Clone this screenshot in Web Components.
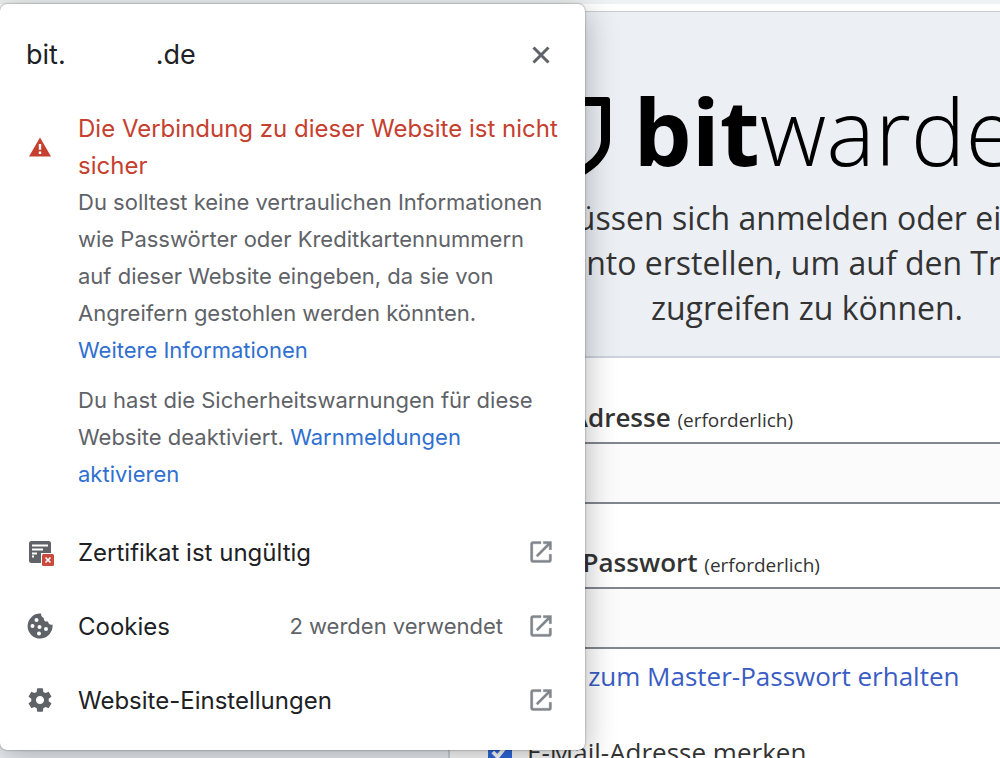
<!DOCTYPE html>
<html lang="de">
<head>
<meta charset="utf-8">
<title>Bitwarden Web-Tresor</title>
<style>
  body {
    margin: 0;
    min-height: 100vh;
    overflow: hidden;
    position: relative;
    background: #ecf0f5;
    color: #333;
    font-family: "Open Sans", sans-serif;
  }
</style>
</head>
<body>
<vault-page></vault-page>
<site-info></site-info>

<script>
const define = (name, html, setup) => {
  const template = document.createElement("template");
  template.innerHTML = html;
  customElements.define(name, class extends HTMLElement {
    constructor() {
      super();
      this.attachShadow({ mode: "open" }).appendChild(template.content.cloneNode(true));
    }

    connectedCallback() {
      if (setup) setup(this, this.shadowRoot);
    }
  });
};

define("bitwarden-logo", `
<style>
  :host {
    display: flex;
    justify-content: center;
    gap: 24px;
    color: #000;
    font-size: 92px;
    line-height: 92px;
    font-weight: 300;
  }
  svg {
    width: 66px;
    height: 82px;
    margin-top: 12px;
  }
  b { font-weight: 700; }
</style>
<svg viewBox="0 0 66 82" aria-hidden="true">
  <path fill-rule="evenodd" d="M3 0H63Q66 0 66 3V43C66 62 46 76 33 82C20 76 0 62 0 43V3Q0 0 3 0ZM33 9V72C42 67 57 57 57 43V9Z"/>
</svg>
<span><b>bit</b>warden</span>`);

define("form-field", `
<style>
  :host { display: block; }
  label {
    display: block;
    font-size: 26px;
    line-height: 36px;
    font-weight: 600;
    margin-bottom: 7px;
  }
  small {
    font-size: 19px;
    line-height: 1;
    font-weight: 400;
  }
  input {
    display: block;
    box-sizing: border-box;
    width: 100%;
    height: 62px;
    padding: 0 16px;
    border: 2px solid #82868f;
    border-radius: 4px;
    background: #fbfbfb;
    font: inherit;
    font-size: 26px;
    outline: none;
  }
</style>
<label for="field"><slot></slot> <small>(erforderlich)</small></label>
<input id="field">`, (host, root) => {
  root.querySelector("input").type = host.getAttribute("type") || "text";
});

define("vault-page", `
<style>
  :host { display: block; }
  .toolbar {
    height: 7px;
    border-top: 4px solid #eff2f2;
    border-bottom: 1px solid #c9ccd1;
    background: #fff;
  }
  .layout {
    display: grid;
    grid-template-columns: 448px minmax(718px, 1fr);
  }
  main { grid-column: 2; }
  header { padding: 73px 24px 26px; }
  header p {
    max-width: 640px;
    margin: 16px auto 0;
    font-size: 32px;
    line-height: 45px;
    text-align: center;
  }
  form {
    padding: 41px 36px 60px;
    border: 2px solid #ced2dc;
    background: #fff;
    font-size: 26px;
    line-height: 36px;
  }
  form-field + form-field { margin-top: 40px; }
  a {
    display: block;
    margin-top: 9px;
    color: #3a5cc5;
    text-decoration: none;
  }
  .remember {
    display: flex;
    align-items: center;
    gap: 15px;
    margin-top: 40px;
  }
  input {
    width: 24px;
    height: 24px;
    margin: 0 0 0 2px;
    accent-color: #2f6ae0;
  }
</style>
<div class="toolbar"></div>
<div class="layout">
  <main>
    <header>
      <bitwarden-logo></bitwarden-logo>
      <p>Sie müssen sich anmelden oder ein neues Konto erstellen, um auf den Tresor zugreifen zu können.</p>
    </header>
    <form>
      <form-field type="email">E-Mail-Adresse</form-field>
      <form-field type="password">Master-Passwort</form-field>
      <a href="#hint">Hinweis zum Master-Passwort erhalten</a>
      <label class="remember"><input type="checkbox" checked>E-Mail-Adresse merken</label>
    </form>
  </main>
</div>`);

define("info-row", `
<style>
  :host { display: block; }
  button {
    display: grid;
    grid-template-columns: 28px 1fr auto 28px;
    align-items: center;
    column-gap: 24px;
    width: 100%;
    height: 74px;
    padding: 0;
    border: 0;
    background: none;
    color: #202124;
    font: inherit;
    font-size: 24px;
    text-align: left;
  }
  .detail {
    color: #5f6368;
    font-size: 22px;
  }
  svg {
    width: 28px;
    height: 28px;
    fill: #80868b;
    stroke: #80868b;
    stroke-width: .3;
  }
  ::slotted(svg) {
    display: block;
    width: 28px;
    height: 28px;
  }
</style>
<button type="button">
  <slot name="icon"></slot>
  <slot></slot>
  <span class="detail"><slot name="detail"></slot></span>
  <svg viewBox="0 0 24 24" aria-hidden="true">
    <path d="M19 19H5V5h7V3H5a2 2 0 0 0-2 2v14a2 2 0 0 0 2 2h14c1.100 0 2-.9 2-2v-5h-2v5zM14 3v2h3.590l-9.830 9.830 1.410 1.410L19 6.410V10h2V3h-7z"/>
  </svg>
</button>`);

define("site-info", `
<style>
  :host {
    position: absolute;
    top: 4px;
    left: 0;
    box-sizing: border-box;
    width: 100%;
    max-width: 585px;
    padding: 35px 30px 13px 26px;
    border-radius: 7px;
    background: #fff;
    box-shadow: 0 0 2px rgba(0, 0, 0, .5), 0 6px 32px rgba(0, 0, 0, .3);
    color: #5f6368;
    font-family: Inter, "Liberation Sans", sans-serif;
    font-size: 22px;
    line-height: 37px;
  }
  .title {
    display: flex;
    justify-content: space-between;
    align-items: center;
  }
  h1 {
    display: flex;
    gap: 90px;
    margin: 0;
    color: #202124;
    font-size: 27px;
    line-height: 32px;
    font-weight: 400;
  }
  .close {
    width: 28px;
    height: 28px;
    padding: 0;
    border: 0;
    background: none;
  }
  .close svg { display: block; }
  .status {
    display: grid;
    grid-template-columns: 28px 1fr;
    align-items: center;
    column-gap: 24px;
    margin: 39px -5px 22px 0;
  }
  .status > svg { justify-self: center; }
  h2 {
    margin: 0;
    color: #c5402f;
    font-size: 24px;
    font-weight: 400;
  }
  .text { grid-column: 2; }
  p { margin: 0; }
  p + p { margin-top: 13px; }
  a {
    color: #3070d0;
    text-decoration: none;
  }
</style>
<div class="title">
  <h1><span>bit.</span><span>.de</span></h1>
  <button class="close" type="button" aria-label="Schließen">
    <svg width="28" height="28" viewBox="0 0 28 28"><path d="M6.500 6.500l15 15m0-15l-15 15" stroke="#5f6368" stroke-width="3"/></svg>
  </button>
</div>
<div class="status">
  <svg width="24" height="24" viewBox="0 0 24 24" aria-hidden="true"><path fill="#c5402f" d="M1 21.500h22L12 2.500 1 21.500zm12.200-2.500h-2.400v-2.400h2.400V19zm0-4.200h-2.400V9h2.400v5.800z"/></svg>
  <h2>Die Verbindung zu dieser Website ist nicht sicher</h2>
  <div class="text">
    <p>Du solltest keine vertraulichen Informationen wie Passwörter oder Kreditkartennummern auf dieser Website eingeben, da sie von Angreifern gestohlen werden könnten. <a href="#info">Weitere Informationen</a></p>
    <p>Du hast die Sicherheitswarnungen für diese Website deaktiviert. <a href="#warn">Warnmeldungen aktivieren</a></p>
  </div>
</div>
<info-row>
  <svg slot="icon" viewBox="0 0 28 28" aria-hidden="true">
    <rect x="3" y="3" width="22" height="22" rx="2.500" fill="#5f6368"/>
    <path d="M6 7.500h16M6 11.500h11M6 15.500h5M6 18.500h2" stroke="#fff" stroke-width="1.800"/>
    <rect x="15" y="15" width="15" height="15" fill="#fff"/>
    <rect x="16" y="16" width="12" height="12" rx="1.500" fill="#c94a3d"/>
    <path d="M19.500 19.500l5 5m0-5l-5 5" stroke="#fff" stroke-width="1.600"/>
  </svg>
  Zertifikat ist ungültig
</info-row>
<info-row>
  <svg slot="icon" viewBox="0 0 28 28" aria-hidden="true">
    <path fill="#5f6368" d="M15 1.600A12.500 12.500 0 1 0 26.500 12.500Q23 13.500 22 9.500Q17.500 10 17.800 6Q15 5 15 1.600Z"/>
    <g fill="#fff"><circle cx="10.500" cy="8" r="2"/><circle cx="6.500" cy="14" r="2"/><circle cx="13.500" cy="15" r="2"/><circle cx="20" cy="17" r="2"/><circle cx="13" cy="21.500" r="2"/></g>
  </svg>
  Cookies
  <span slot="detail">2 werden verwendet</span>
</info-row>
<info-row>
  <svg slot="icon" viewBox="0 0 24 24" aria-hidden="true">
    <path fill="#5f6368" d="M19.430 12.980c.040-.320.070-.640.070-.980s-.030-.660-.070-.980l2.110-1.650c.190-.150.240-.420.120-.640l-2-3.460c-.120-.220-.390-.300-.610-.220l-2.490 1c-.520-.400-1.080-.730-1.690-.980l-.380-2.650C14.460 2.180 14.250 2 14 2h-4c-.250 0-.460.180-.490.420l-.380 2.650c-.610.250-1.170.590-1.690.980l-2.490-1c-.230-.090-.490 0-.610.220l-2 3.460c-.130.220-.070.490.120.640l2.110 1.650c-.040.320-.070.650-.070.980s.030.660.070.980l-2.110 1.650c-.190.150-.240.420-.120.640l2 3.460c.120.220.390.300.610.220l2.490-1c.520.400 1.080.730 1.690.980l.380 2.650c.030.240.240.420.490.420h4c.250 0 .460-.180.490-.420l.380-2.650c.610-.250 1.170-.590 1.690-.980l2.490 1c.230.090.490 0 .610-.220l2-3.460c.120-.220.070-.490-.120-.640l-2.110-1.650zM12 15.500c-1.930 0-3.500-1.570-3.500-3.500s1.570-3.500 3.500-3.500 3.500 1.570 3.500 3.500-1.570 3.500-3.500 3.500z"/>
  </svg>
  Website-Einstellungen
</info-row>`);
</script>
</body>
</html>
